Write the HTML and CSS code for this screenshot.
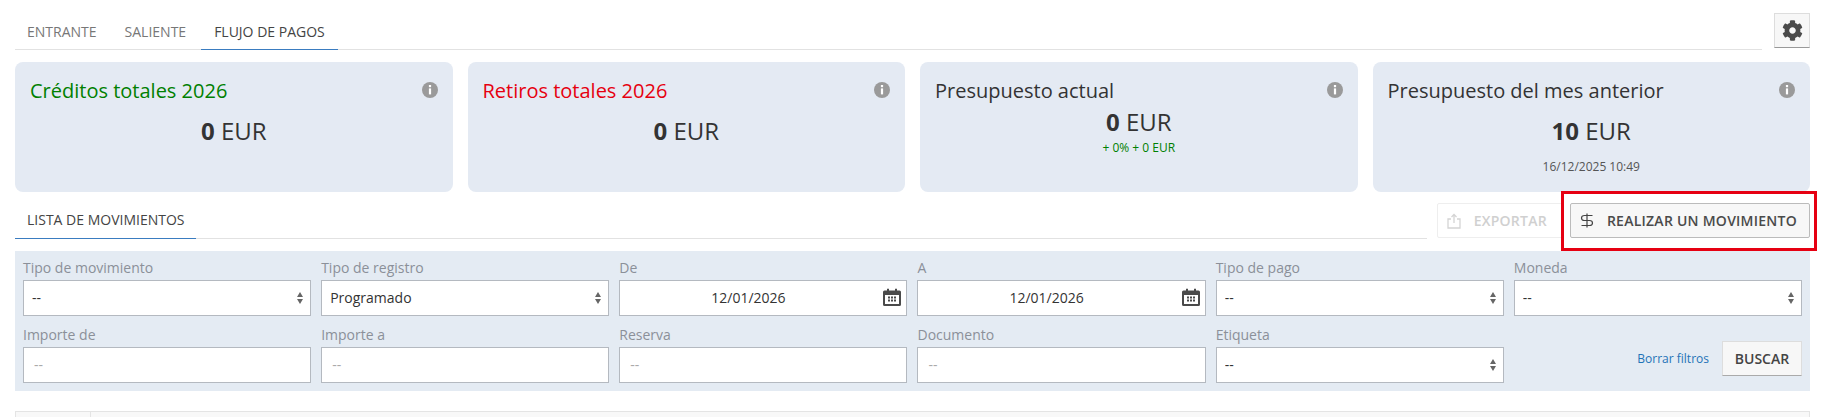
FILE: index.html
```html
<!DOCTYPE html>
<html lang="es">

<head>
    <meta charset="UTF-8">
    <title>Flujo de pagos</title>
    <link rel="stylesheet" href="styles.css">
</head>

<body>
    <div class="top-bar">
        <nav class="tabs">
            <a class="tab">ENTRANTE</a>
            <a class="tab">SALIENTE</a>
            <a class="tab active">FLUJO DE PAGOS</a>
        </nav>
        <button class="gear-btn" aria-label="Ajustes">
            <svg width="21" height="21" viewBox="0 0 512 512"><path fill="#4a4a4a" d="M487.4 315.7l-42.6-24.6c4.3-23.2 4.3-47 0-70.2l42.6-24.6c4.9-2.8 7.1-8.6 5.5-14-11.1-35.6-30-67.8-54.7-94.6-3.8-4.1-10-5.1-14.8-2.3L380.8 110c-17.9-15.4-38.5-27.3-60.8-35.1V25.8c0-5.6-3.9-10.5-9.4-11.7-36.7-8.2-74.3-7.8-109.2 0-5.5 1.2-9.4 6.1-9.4 11.7V75c-22.2 7.9-42.8 19.8-60.8 35.1L88.7 85.5c-4.9-2.8-11-1.9-14.8 2.3-24.7 26.7-43.6 58.9-54.7 94.6-1.7 5.4.6 11.2 5.5 14L67.3 221c-4.3 23.2-4.3 47 0 70.2l-42.6 24.6c-4.9 2.8-7.1 8.6-5.5 14 11.1 35.6 30 67.8 54.7 94.6 3.8 4.1 10 5.1 14.8 2.3l42.6-24.6c17.9 15.4 38.5 27.3 60.8 35.1v49.2c0 5.6 3.9 10.5 9.4 11.7 36.7 8.2 74.3 7.8 109.2 0 5.5-1.2 9.4-6.1 9.4-11.7v-49.2c22.2-7.9 42.8-19.8 60.8-35.1l42.6 24.6c4.9 2.8 11 1.9 14.8-2.3 24.7-26.7 43.6-58.9 54.7-94.6 1.5-5.5-.7-11.3-5.6-14.1zM256 336c-44.1 0-80-35.9-80-80s35.9-80 80-80 80 35.9 80 80-35.9 80-80 80z"/></svg>
        </button>
    </div>

    <div class="cards">
        <div class="card">
            <div class="card-head">
                <span class="card-title green">Créditos totales 2026</span>
                <svg class="info" width="16" height="16" viewBox="0 0 16 16"><circle cx="8" cy="8" r="8" fill="#9a9a9a"/><rect x="6.9" y="3" width="2.2" height="2.2" fill="#fff"/><rect x="6.9" y="6.4" width="2.2" height="6" fill="#fff"/></svg>
            </div>
            <div class="card-value"><b>0</b> EUR</div>
        </div>
        <div class="card">
            <div class="card-head">
                <span class="card-title red">Retiros totales 2026</span>
                <svg class="info" width="16" height="16" viewBox="0 0 16 16"><circle cx="8" cy="8" r="8" fill="#9a9a9a"/><rect x="6.9" y="3" width="2.2" height="2.2" fill="#fff"/><rect x="6.9" y="6.4" width="2.2" height="6" fill="#fff"/></svg>
            </div>
            <div class="card-value"><b>0</b> EUR</div>
        </div>
        <div class="card">
            <div class="card-head">
                <span class="card-title">Presupuesto actual</span>
                <svg class="info" width="16" height="16" viewBox="0 0 16 16"><circle cx="8" cy="8" r="8" fill="#9a9a9a"/><rect x="6.9" y="3" width="2.2" height="2.2" fill="#fff"/><rect x="6.9" y="6.4" width="2.2" height="6" fill="#fff"/></svg>
            </div>
            <div class="card-value compact"><b>0</b> EUR</div>
            <div class="card-sub green">+ 0% + 0 EUR</div>
        </div>
        <div class="card">
            <div class="card-head">
                <span class="card-title">Presupuesto del mes anterior</span>
                <svg class="info" width="16" height="16" viewBox="0 0 16 16"><circle cx="8" cy="8" r="8" fill="#9a9a9a"/><rect x="6.9" y="3" width="2.2" height="2.2" fill="#fff"/><rect x="6.9" y="6.4" width="2.2" height="6" fill="#fff"/></svg>
            </div>
            <div class="card-value"><b>10</b> EUR</div>
            <div class="card-date">16/12/2025 10:49</div>
        </div>
    </div>

    <div class="list-bar">
        <div class="list-tabs">
            <a class="list-tab">LISTA DE MOVIMIENTOS</a>
        </div>
        <button class="action-btn disabled">
            <svg width="14" height="16" viewBox="0 0 14 16" fill="none" stroke="#d4d4d4" stroke-width="1.3"><path d="M4 6H1v9h12V6h-3"/><path d="M7 10V1.5M4.5 4 7 1.5 9.5 4"/></svg>
            EXPORTAR
        </button>
        <div class="highlight">
            <button class="action-btn">
                <svg width="14" height="15" viewBox="0 0 14 15" fill="none" stroke="#444" stroke-width="1.2"><path d="M12.500 2.500H4.500C2.500 2.500 1.500 3.600 1.500 5s1 2.500 3 2.500h5c2 0 3 1.100 3 2.500s-1 2.500-3 2.500H1.500"/><path d="M7 .5v14"/></svg>
                REALIZAR UN MOVIMIENTO
            </button>
        </div>
    </div>

    <form class="filters">
        <div class="field">
            <label>Tipo de movimiento</label>
            <div class="select-wrap"><select><option>--</option></select></div>
        </div>
        <div class="field">
            <label>Tipo de registro</label>
            <div class="select-wrap"><select><option>Programado</option></select></div>
        </div>
        <div class="field">
            <label>De</label>
            <div class="date-wrap">
                <input type="text" value="12/01/2026">
                <svg class="calendar" width="18" height="18" viewBox="0 0 18 18"><path fill="#4a4a4a" d="M1.5 2.5H4V.8h2v1.7h6V.8h2v1.7h2.5A1.5 1.5 0 0 1 18 4v12.5a1.5 1.5 0 0 1-1.5 1.5h-15A1.5 1.5 0 0 1 0 16.500V4a1.500 1.500 0 0 1 1.500-1.500z"/><rect x="2" y="7" width="14" height="9" fill="#fff"/><path fill="#4a4a4a" d="M5 8.500h2v2H5zM8 8.500h2v2H8zM11 8.500h2v2h-2zM5 11.500h2v2H5zM8 11.500h2v2H8zM11 11.500h2v2h-2z"/></svg>
            </div>
        </div>
        <div class="field">
            <label>A</label>
            <div class="date-wrap">
                <input type="text" value="12/01/2026">
                <svg class="calendar" width="18" height="18" viewBox="0 0 18 18"><path fill="#4a4a4a" d="M1.5 2.5H4V.8h2v1.7h6V.8h2v1.7h2.5A1.5 1.5 0 0 1 18 4v12.5a1.5 1.5 0 0 1-1.5 1.5h-15A1.5 1.5 0 0 1 0 16.500V4a1.500 1.500 0 0 1 1.500-1.500z"/><rect x="2" y="7" width="14" height="9" fill="#fff"/><path fill="#4a4a4a" d="M5 8.500h2v2H5zM8 8.500h2v2H8zM11 8.500h2v2h-2zM5 11.500h2v2H5zM8 11.500h2v2H8zM11 11.500h2v2h-2z"/></svg>
            </div>
        </div>
        <div class="field">
            <label>Tipo de pago</label>
            <div class="select-wrap"><select><option>--</option></select></div>
        </div>
        <div class="field">
            <label>Moneda</label>
            <div class="select-wrap"><select><option>--</option></select></div>
        </div>

        <div class="field">
            <label>Importe de</label>
            <input type="text" placeholder="--">
        </div>
        <div class="field">
            <label>Importe a</label>
            <input type="text" placeholder="--">
        </div>
        <div class="field">
            <label>Reserva</label>
            <input type="text" placeholder="--">
        </div>
        <div class="field">
            <label>Documento</label>
            <input type="text" placeholder="--">
        </div>
        <div class="field">
            <label>Etiqueta</label>
            <div class="select-wrap"><select><option>--</option></select></div>
        </div>
        <div class="filter-actions">
            <a class="clear-link">Borrar filtros</a>
            <button type="button" class="search-btn">BUSCAR</button>
        </div>
    </form>

    <div class="table-head">
        <div class="table-cell"></div>
    </div>
</body>

</html>
```

FILE: styles.css
```css
* {
    box-sizing: border-box;
}

html,
body {
    height: 417px;
    overflow: hidden;
}

body {
    margin: 0;
    padding: 13px 15px 0;
    background: #fff;
    color: #333;
    font-family: "Open Sans", sans-serif;
    font-size: 14px;
}

button {
    font-family: inherit;
}

.top-bar {
    display: flex;
    height: 36px;
}

.tabs {
    flex: 1;
    display: flex;
    gap: 4px;
    height: 37px;
    border-bottom: 1px solid #e2e2e2;
}

.tab {
    padding: 0 12px;
    height: 37px;
    line-height: 37px;
    font-size: 14px;
    color: #777;
}

.tab.active {
    margin-left: -1px;
    padding: 0 13px;
    color: #444;
    border-bottom: 1px solid #3a7cc0;
}

.gear-btn {
    display: flex;
    align-items: center;
    justify-content: center;
    width: 36px;
    height: 35px;
    margin-left: 12px;
    padding: 0;
    background: #f7f7f7;
    border: 1px solid #ddd;
    border-bottom-color: #999;
}

.cards {
    display: grid;
    grid-template-columns: repeat(4, 1fr);
    gap: 15px;
    margin-top: 13px;
}

.card {
    height: 130px;
    padding: 17px 15px 0;
    background: #e4eaf3;
    border-radius: 8px;
}

.card-head {
    display: flex;
    justify-content: space-between;
    align-items: flex-start;
}

.card-title {
    font-size: 20px;
    line-height: 24px;
}

.info {
    margin-top: 3px;
}

.card-value {
    margin-top: 11px;
    font-size: 24px;
    line-height: 34px;
    text-align: center;
}

.card-value.compact {
    margin-top: 2px;
}

.card-sub {
    margin-top: 1px;
    font-size: 12px;
    line-height: 16px;
    text-align: center;
}

.card-date {
    margin-top: 11px;
    font-size: 12px;
    line-height: 16px;
    text-align: center;
    color: #555;
}

.green {
    color: #008000;
}

.red {
    color: #e6000f;
}

.list-bar {
    display: flex;
    height: 36px;
    margin-top: 11px;
    margin-bottom: 12px;
}

.list-tabs {
    flex: 1;
    height: 36px;
    border-bottom: 1px solid #e2e2e2;
}

.list-tab {
    display: inline-block;
    height: 36px;
    padding: 0 11px 0 12px;
    line-height: 34px;
    font-size: 14px;
    color: #444;
    border-bottom: 1px solid #3a7cc0;
}

.action-btn {
    display: flex;
    align-items: center;
    gap: 13px;
    height: 35px;
    padding: 0 12px 0 9px;
    font-size: 14px;
    font-weight: 600;
    letter-spacing: 0.25px;
    color: #4a4a4a;
    background: #f7f7f7;
    border: 1px solid #bbb;
    border-radius: 2px;
    white-space: nowrap;
}

.action-btn.disabled {
    margin: 0 7px 0 10px;
    padding: 0 15px 0 9px;
    color: #d0d0d0;
    background: #fff;
    border-color: #eee;
}

.highlight {
    position: relative;
}

/* marco rojo de la captura */
.highlight::after {
    content: "";
    position: absolute;
    top: -12px;
    bottom: -12px;
    left: -9px;
    right: -7px;
    border: 3px solid #e60012;
}

.filters {
    display: grid;
    grid-template-columns: repeat(6, 1fr);
    gap: 10px;
    height: 140px;
    padding: 8px;
    background: #e4ebf3;
}

.field label {
    display: block;
    height: 21px;
    line-height: 18px;
    color: #8b9099;
}

.field input,
.field select {
    display: block;
    width: 100%;
    height: 36px;
    margin: 0;
    font-family: inherit;
    font-size: 14px;
    color: #333;
    background: #fff;
    border: 1px solid #b4b9c0;
    border-radius: 0;
    outline: none;
}

.field input {
    padding: 0 10px 2px;
}

.field input::placeholder {
    color: #aaa;
}

.field select {
    appearance: none;
    padding: 0 24px 2px 8px;
}

.select-wrap,
.date-wrap {
    position: relative;
}

.select-wrap::before,
.select-wrap::after {
    content: "";
    position: absolute;
    right: 8px;
    border-left: 3px solid transparent;
    border-right: 3px solid transparent;
}

.select-wrap::before {
    top: 12px;
    border-bottom: 5px solid #666;
}

.select-wrap::after {
    top: 19px;
    border-top: 5px solid #666;
}

.date-wrap input {
    padding: 0 30px 2px 0;
    text-align: center;
}

.calendar {
    position: absolute;
    top: 8px;
    right: 6px;
}

.filter-actions {
    display: flex;
    align-items: flex-end;
    justify-content: flex-end;
    gap: 13px;
    padding-bottom: 7px;
}

.clear-link {
    line-height: 34px;
    font-size: 12px;
    color: #1f73b7;
}

.search-btn {
    width: 80px;
    height: 35px;
    padding: 0;
    font-size: 14px;
    font-weight: 600;
    color: #444;
    background: #f7f7f7;
    border: 1px solid #ddd;
    border-bottom-color: #aaa;
}

.table-head {
    display: flex;
    height: 6px;
    margin-top: 20px;
    background: #f8f8f8;
    border: 1px solid #e4e4e4;
    border-bottom: 0;
}

.table-cell {
    width: 75px;
    border-right: 1px solid #e4e4e4;
}
```
